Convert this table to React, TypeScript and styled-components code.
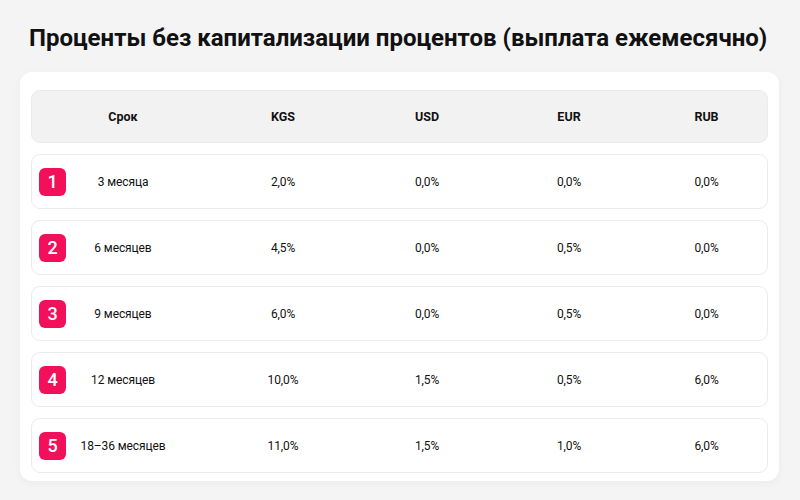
import styled, { createGlobalStyle } from "styled-components";

const GlobalStyle = createGlobalStyle`
  html, body {
    margin: 0;
    padding: 0;
    background: #f4f4f4;
  }
  body {
    font-family: Roboto, "Liberation Sans", sans-serif;
    color: #111;
  }
`;

const Page = styled.div`
  width: 800px;
  height: 500px;
  padding: 0 21px 0 20px;
  box-sizing: border-box;
  overflow: hidden;
`;

const Title = styled.h1`
  margin: 0;
  padding: 22px 0 0 9px;
  height: 50px;
  box-sizing: border-box;
  font-size: 24px;
  line-height: 32px;
  font-weight: 700;
  letter-spacing: 0;
  color: #111;
  white-space: nowrap;
`;

const Card = styled.div`
  margin-top: 22px;
  background: #fff;
  border-radius: 12px;
  padding: 18px 11px 8px 11px;
  box-shadow: 0 2px 8px rgba(0, 0, 0, 0.04);
  display: flex;
  flex-direction: column;
  gap: 11px;
`;

const Rows = styled.div`
  display: flex;
  flex-direction: column;
  gap: 11px;
`;

const RowBase = styled.div`
  display: grid;
  grid-template-columns: 182px 138px 150px 134px 1fr;
  align-items: center;
  box-sizing: border-box;
  border: 1px solid #ebebeb;
  border-radius: 9px;
  font-size: 12px;
`;

const HeaderRow = styled(RowBase)`
  height: 53px;
  background: #f2f2f2;
  font-weight: 700;
  font-size: 12.5px;
`;

const DataRow = styled(RowBase)`
  height: 55px;
  background: #fff;
  font-weight: 400;
  letter-spacing: -0.1px;
`;

const Cell = styled.div<{ $offset?: number }>`
  text-align: center;
  padding-left: ${(p) => (p.$offset ? `${p.$offset}px` : "0")};
`;

const TermCell = styled.div`
  display: grid;
  grid-template-columns: 27px 1fr 27px;
  align-items: center;
  padding: 0 7px;
`;

const Term = styled.span`
  text-align: center;
  white-space: nowrap;
`;

const Badge = styled.div`
  width: 27px;
  height: 28px;
  border-radius: 6px;
  background: #f2105a;
  color: #fff;
  font-size: 18px;
  font-weight: 500;
  display: flex;
  align-items: center;
  justify-content: center;
`;

const currencies = ["KGS", "USD", "EUR", "RUB"];

const rows = [
  { term: "3 месяца", values: ["2,0%", "0,0%", "0,0%", "0,0%"] },
  { term: "6 месяцев", values: ["4,5%", "0,0%", "0,5%", "0,0%"] },
  { term: "9 месяцев", values: ["6,0%", "0,0%", "0,5%", "0,0%"] },
  { term: "12 месяцев", values: ["10,0%", "1,5%", "0,5%", "6,0%"] },
  { term: "18–36 месяцев", values: ["11,0%", "1,5%", "1,0%", "6,0%"] },
];

export default function App() {
  return (
    <>
      <GlobalStyle />
      <Page>
        <Title>Проценты без капитализации процентов (выплата ежемесячно)</Title>
        <Card>
          <HeaderRow>
            <TermCell>
              <span />
              <Term>Срок</Term>
              <span />
            </TermCell>
            {currencies.map((c, i) => (
              <Cell key={c} $offset={i === 3 ? 10 : 0}>
                {c}
              </Cell>
            ))}
          </HeaderRow>
          <Rows>
            {rows.map((r, idx) => (
              <DataRow key={r.term}>
                <TermCell>
                  <Badge>{idx + 1}</Badge>
                  <Term>{r.term}</Term>
                  <span />
                </TermCell>
                {r.values.map((v, i) => (
                  <Cell key={i} $offset={i === 3 ? 10 : 0}>
                    {v}
                  </Cell>
                ))}
              </DataRow>
            ))}
          </Rows>
        </Card>
      </Page>
    </>
  );
}
